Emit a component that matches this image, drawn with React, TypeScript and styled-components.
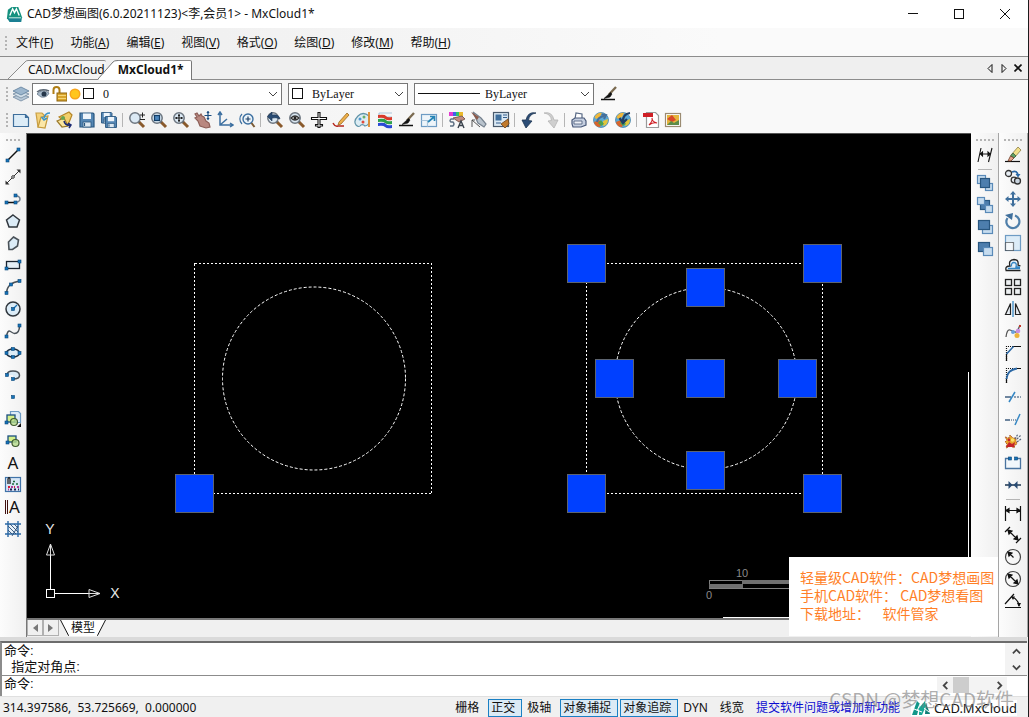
import React from "react";
import styled, { createGlobalStyle } from "styled-components";

const UI_FONT = `"Noto Sans", "Noto Sans CJK SC", sans-serif`;
const COMMAND_FONT = `"Liberation Sans", "Noto Sans CJK SC", sans-serif`;

const GlobalStyle = createGlobalStyle`
  * { box-sizing: border-box; }
  body {
    margin: 0;
    font: 12px/16px ${UI_FONT};
    color: #111;
    background: #f0f0f0;
  }
  button, input, select {
    font: inherit;
    color: inherit;
    margin: 0;
    padding: 0;
    border: 0;
    background: none;
    border-radius: 0;
  }
  svg { display: block; flex: none; }
`;

/* ---------- icons ---------- */

const Svg = ({ children, size = 18 }: { children: React.ReactNode; size?: number }) => (
  <svg width={size} height={size} viewBox="0 0 18 18" fill="none" stroke="#222" strokeWidth="1.2" aria-hidden="true">
    {children}
  </svg>
);

const Node = ({ x, y }: { x: number; y: number }) => (
  <rect x={x - 1.5} y={y - 1.5} width="3" height="3" fill="#1673b8" stroke="#0b4678" strokeWidth="0.6" />
);

const Lens = ({ children }: { children?: React.ReactNode }) => (
  <>
    <path d="M10.5 10.5L16 16" stroke="#8a5a2c" strokeWidth="3" />
    <path d="M10 10l1.5 1.5" stroke="#555" strokeWidth="2" />
    <circle cx="7" cy="7" r="5.2" fill="#dbe9f4" stroke="#6d7680" strokeWidth="1.5" />
    {children}
  </>
);

const Brush = () => (
  <>
    <path d="M16 2L9 9.5" stroke="#7a6a50" strokeWidth="2.4" />
    <path d="M10.5 7.5L4 13.5l6-1.5 2-3z" fill="#111" stroke="#111" strokeWidth="0.6" />
  </>
);

const Globe = () => (
  <>
    <circle cx="9" cy="9" r="7.5" fill="#5aa9d6" stroke="#4a87aa" strokeWidth="0.8" />
    <path d="M2.5 6Q6 1 10 2L8 6 4 8z" fill="#f0b73a" stroke="none" />
    <path d="M2 11l5-2 3 3-2 4Q3 16 2 11z" fill="#d9652b" stroke="none" />
    <path d="M11 10l5-2q0 6-5 7z" fill="#e2c53c" stroke="none" />
    <path d="M6 12l3 3 3-2-3-4z" fill="#4da04e" stroke="none" />
  </>
);

const Floppy = ({ x = 0, y = 0, s = 1 }: { x?: number; y?: number; s?: number }) => (
  <g transform={`translate(${x} ${y}) scale(${s})`}>
    <path d="M2 2h13l1 1v13H2z" fill="#5687b4" stroke="#28567f" />
    <rect x="5" y="2.5" width="8" height="5.5" fill="#eef5fb" stroke="none" />
    <rect x="5" y="11" width="8" height="5" fill="#dde8f1" stroke="#28567f" strokeWidth="0.8" />
    <path d="M6.5 12v3" stroke="#28567f" />
  </g>
);

const DARK = { fill: "#4d7ead", stroke: "#28567f" };
const LIGHT = { fill: "#c6dcef", stroke: "#5a8ab8" };

const ICONS: Record<string, React.ReactNode> = {
  bringToFront: (
    <>
      <rect x="1.5" y="1.5" width="8" height="8" {...LIGHT} />
      <rect x="9.5" y="9.5" width="7" height="7" {...LIGHT} />
      <rect x="4.5" y="4.5" width="9" height="9" {...DARK} />
    </>
  ),
  sendToBack: (
    <>
      <rect x="4.5" y="4.5" width="9" height="9" {...DARK} />
      <rect x="1.5" y="1.5" width="7" height="7" {...LIGHT} />
      <rect x="9.5" y="9.5" width="7" height="7" {...LIGHT} />
    </>
  ),
  bringAbove: (
    <>
      <rect x="6.5" y="7.5" width="10" height="8" {...LIGHT} />
      <rect x="2.5" y="2.5" width="11" height="9" {...DARK} />
    </>
  ),
  sendUnder: (
    <>
      <rect x="2.5" y="2.5" width="11" height="9" {...DARK} />
      <rect x="7.5" y="7.5" width="9" height="8" {...LIGHT} />
    </>
  ),
  layers: (
    <>
      <path d="M1 12l8-3 8 3-8 4z" fill="#b8c9d8" stroke="#71889e" strokeWidth="0.8" />
      <path d="M1 9l8-3 8 3-8 4z" fill="#d2dfe9" stroke="#71889e" strokeWidth="0.8" />
      <path d="M1 6l8-4 8 4-8 4z" fill="#9cb6cd" stroke="#5d7c99" strokeWidth="0.8" />
    </>
  ),
  newFile: <path d="M1.5 3.5h12l3 3v9h-15zM13.5 3.5v3h3" fill="#dcecf7" stroke="#3f6f9c" />,
  open: (
    <>
      <path d="M2 2h6l2 2v12H4z" fill="#f4d27b" stroke="#c99f45" />
      <path d="M7 6l7-1-3 12-7-1z" fill="#fbe7a8" stroke="#c49a3c" />
      <path d="M16 2q-5 0-6 5M7.500 6l2.500 3 3-2" stroke="#3a93c8" strokeWidth="1.6" />
    </>
  ),
  recent: (
    <>
      <path d="M3 6L13 1l3 3-4 10z" fill="#f3cf6b" stroke="#b58527" />
      <path d="M1 10l7-3 4 8-6 1z" fill="#fae59e" stroke="#9c7a2a" />
      <path d="M8 10q1 5 7 4m-3-2l3 2-2 3" stroke="#1c2a72" strokeWidth="1.5" />
      <circle cx="7" cy="7" r="2" fill="#68a552" stroke="none" />
    </>
  ),
  save: <Floppy />,
  saveAll: (
    <>
      <Floppy s={0.75} />
      <Floppy x={4} y={4} s={0.78} />
    </>
  ),
  zoomRt: (
    <>
      <Lens />
      <path d="M12 4h5M14.5 1.500v5M12 8.500h5" stroke="#222" strokeWidth="1" />
    </>
  ),
  zoomWin: (
    <Lens>
      <rect x="4.5" y="4.5" width="5" height="5" fill="#4b86bd" stroke="#123d66" />
    </Lens>
  ),
  zoomExt: (
    <Lens>
      <path d="M7 3v8M3 7h8M6 4.5h2M6 9.5h2M4.5 6v2M9.5 6v2" stroke="#222" strokeWidth="1.2" />
    </Lens>
  ),
  pan: (
    <>
      <path d="M1 3l2 3-2 1 3 3 2 5 6 2 4-1-1-4-3-2-2-4-2-1-1-2-2 2-2-3z" fill="#b98880" stroke="#8d5f58" />
      <path d="M14 1v7M10.5 4.5h7M13 2l1-1.5L15 2M13 7l1 1.5L15 7" stroke="#1a4c80" />
    </>
  ),
  ucs: <path d="M4 2v12h12M2 4l2-3 2 3M14 12l3 2-3 2M4 14l7-6" stroke="#3c6fa0" strokeWidth="1.5" />,
  zoomPlus: (
    <>
      <path d="M4 3a7 7 0 0 0 0 10" stroke="#3c6fa0" />
      <circle cx="10" cy="8" r="5" fill="#eaf3fa" stroke="#3c6fa0" strokeWidth="1.4" />
      <path d="M13.5 12l3 4" stroke="#7a5a34" strokeWidth="2" />
      <path d="M10 5.5v5M7.5 8h5" stroke="#1c3d63" />
    </>
  ),
  zoomPrev: (
    <Lens>
      <path d="M14 8Q13 3 6 4V1L1.5 5.5 6 10V7q4-1 8 1z" fill="#284b73" stroke="#1c3450" strokeWidth="0.6" />
    </Lens>
  ),
  zoomEye: (
    <Lens>
      <path d="M3 7q4-4 8 0-4 4-8 0z" fill="#fff" stroke="#333" />
      <circle cx="7" cy="7" r="1.5" fill="#222" stroke="none" />
    </Lens>
  ),
  plane: (
    <path
      d="M8 1.5h2v5h6.500v2H10v5h2.500v1.500H10v1.500H8V15H5.500v-1.500H8v-5H1.500v-2H8z"
      fill="#fff"
      stroke="#111"
      strokeWidth="1.1"
    />
  ),
  pencil: (
    <>
      <path d="M15 2l2 2-8 9-3 1 1-3z" fill="#edaf4a" stroke="#9a6a1f" strokeWidth="0.8" />
      <path d="M1 12q2 4 5 3l6 0" stroke="#b5281e" strokeWidth="1.4" />
    </>
  ),
  palette: (
    <>
      <path d="M15 5Q9 0 4 5T2 14q3 3 5 0 2-1 4 1 5-1 4-6z" fill="#dcecf3" stroke="#5f93a8" />
      <circle cx="6" cy="8" r="1.5" fill="#4d97d1" stroke="none" />
      <circle cx="10" cy="6" r="1.5" fill="#67b06a" stroke="none" />
      <circle cx="9" cy="11" r="1.5" fill="#e04a3a" stroke="none" />
      <path d="M15 1v15" stroke="#e08a2b" strokeWidth="1.8" />
    </>
  ),
  colors: (
    <>
      <path d="M3 2h13M3 2v4h13" stroke="#aac6dc" />
      <path d="M2 4q7-1 8 1t6 1v3q-5 1-7-1T2 7z" fill="#d93a2b" stroke="none" />
      <path d="M2 8q7-1 8 1t6 1v3q-5 1-7-1t-7-1z" fill="#2ea14c" stroke="none" />
      <path d="M2 12q7-1 8 1t6 1v3q-5 1-7-1t-7-1z" fill="#2a49d5" stroke="none" />
    </>
  ),
  brushLine: (
    <>
      <Brush />
      <path d="M1 14.5h14" stroke="#111" strokeWidth="1.5" />
    </>
  ),
  resize: (
    <>
      <rect x="1.5" y="3.5" width="15" height="12" fill="#eef5fa" stroke="#6e9cc4" />
      <path d="M1.5 9.5h6v6" stroke="#a9c4da" />
      <path d="M8 11l6-5M10 5.500h4.500V10" stroke="#2584b5" strokeWidth="1.700" />
    </>
  ),
  textStyle: (
    <>
      <path d="M1 1h4v4H1z" fill="#e33bd0" stroke="none" />
      <path d="M5 1h3v4H5z" fill="#3c63e8" stroke="none" />
      <path d="M8 1h3v4H8z" fill="#2ec26a" stroke="none" />
      <path d="M11 1h4v4h-4z" fill="#eab92c" stroke="none" />
      <path d="M5 7l9-2 3 3-6 3z" fill="#c08c82" stroke="#68463b" strokeWidth="0.8" />
      <path d="M6 8H3q-2 2 0 3h2q2 2 0 4H2" stroke="#5f7184" strokeWidth="1.400" />
      <path d="M10 17l3-7 3 7M11 14.500h4" stroke="#39424c" strokeWidth="1.4" />
    </>
  ),
  erasePen: (
    <>
      <path d="M3 1l8 6 5 6-2 3-6-4z" fill="#b9c3cd" stroke="#76828f" />
      <path d="M1 1l8 5-2 3z" fill="#8c5a4a" stroke="none" />
      <path d="M2 9v7M2 9l8 7M2 9h3" stroke="#444" strokeWidth="0.9" />
    </>
  ),
  sheetSet: (
    <>
      <rect x="1.5" y="1.5" width="15" height="14" fill="#dbe9f4" stroke="#4a5a6c" />
      <rect x="3.5" y="3.5" width="6" height="6" fill="#3f6f9c" stroke="none" />
      <path d="M11 4h4M11 6.5h4M4 12h5" stroke="#345f8c" />
      <path d="M16 8l-7 5 4 4 4-4z" fill="#c07a2d" stroke="#6f421a" strokeWidth="0.8" />
    </>
  ),
  undo: <path d="M16 2Q8 0 6 9L2 9l4 8 6-7-3.500-.5Q9 3 16 2z" fill="#2c4d77" stroke="#1c3450" strokeWidth="0.8" />,
  redo: <path d="M2 2Q10 0 12 9l4 0-4 8-6-7 3.500-.5Q9 3 2 2z" fill="#cfcfcf" stroke="#b2b2b2" strokeWidth="0.8" />,
  print: (
    <>
      <path d="M5 8l1-6 6 1v5" fill="#fff" stroke="#586985" />
      <path d="M2 9l3-2h9l2 3v4l-5 2H3l-1-3z" fill="#c5cfe0" stroke="#4a5a7a" />
      <path d="M4 10h8v3H4z" fill="#eef1f7" stroke="#4a5a7a" strokeWidth="0.8" />
    </>
  ),
  globeUp: (
    <>
      <Globe />
      <path d="M5 11q1-5 7-6M9.5 3.5L14 4l-2 4" stroke="#456f9b" strokeWidth="2" />
    </>
  ),
  globeDown: (
    <>
      <Globe />
      <path d="M16 2q-7 1-7 8M5.5 7l3.500 5 4-4" stroke="#1f3f65" strokeWidth="2.200" />
    </>
  ),
  pdf: (
    <>
      <path d="M4.5 1.5h9l3 3v12h-12z" fill="#fff" stroke="#9a9a9a" />
      <rect x="1" y="2" width="10" height="4" fill="#cf1f25" stroke="none" />
      <path d="M7 14q4-4 3-7 0 4 5 5-4-1-8 2z" stroke="#cf1f25" strokeWidth="1.1" />
    </>
  ),
  image: (
    <>
      <rect x="1.5" y="2.5" width="15" height="13" fill="#fff" stroke="#9b8b72" />
      <rect x="3" y="4" width="12" height="10" fill="#e5b53d" stroke="none" />
      <path d="M3 8l5-4 4 5-4 2z" fill="#d8482a" stroke="none" />
      <path d="M3 14l4-4 3 2 5-3v5z" fill="#5c8c49" stroke="none" />
    </>
  ),
  line: (
    <>
      <path d="M3.5 14.5l11-11" stroke="#111" strokeWidth="1.5" />
      <Node x={3.5} y={14.5} />
      <Node x={14.5} y={3.5} />
    </>
  ),
  xline: (
    <>
      <path d="M2 16L16 2" stroke="#333" strokeWidth="1" />
      <path d="M1.5 12.5v4h4zM12.5 1.5h4v4z" fill="#333" stroke="none" />
      <circle cx="9" cy="9" r="1.3" fill="#fff" stroke="#333" strokeWidth="1" />
    </>
  ),
  polyline: (
    <>
      <path d="M3 12.5h10" stroke="#111" strokeWidth="1.5" />
      <path d="M12 12.5q4-1 4-3.5t-4-3.5" stroke="#6d7c8c" strokeWidth="1.5" />
      <Node x={2.5} y={12.5} />
      <Node x={11.5} y={12.5} />
      <Node x={11.5} y={5.5} />
    </>
  ),
  polygon: <path d="M9 3l6.500 5-2.500 7H5L2.500 8z" fill="#dcecf7" stroke="#30373e" strokeWidth="1.5" />,
  freePoly: <path d="M9.500 3l5 3-1 6-5 3.500H5L4.500 8z" fill="#dcecf7" stroke="#4a5259" strokeWidth="1.6" />,
  rectangle: (
    <>
      <rect x="2.5" y="5.5" width="13" height="7" fill="#e3eef6" stroke="#1a2430" strokeWidth="1.3" />
      <Node x={2.5} y={12.5} />
      <Node x={15.5} y={5.5} />
    </>
  ),
  arc: (
    <>
      <path d="M2.5 15Q3 5 15.5 3" stroke="#4a5259" strokeWidth="1.5" />
      <Node x={2.5} y={15} />
      <Node x={7} y={6.5} />
      <Node x={15.5} y={3} />
    </>
  ),
  circle: (
    <>
      <circle cx="9" cy="9" r="7" fill="#dcecf7" stroke="#30373e" strokeWidth="1.5" />
      <path d="M9 9l4-4" stroke="#1673b8" strokeWidth="1.3" />
      <Node x={9} y={9} />
    </>
  ),
  spline: (
    <>
      <path d="M2.5 14.5q1-7 4-5t4 2q5 0 5-8" stroke="#4a5259" strokeWidth="1.5" />
      <Node x={2.5} y={14.5} />
      <Node x={15.5} y={3.5} />
    </>
  ),
  ellipse: (
    <>
      <ellipse cx="9" cy="9" rx="6.5" ry="4" fill="#dcecf7" stroke="#1f2f3f" strokeWidth="1.5" />
      <Node x={2.5} y={9} />
      <Node x={9} y={5} />
      <Node x={15.5} y={9} />
      <Node x={9} y={13} />
    </>
  ),
  ellipseArc: (
    <>
      <path d="M3 9q0-4 6-4t6.500 4q0 4-6.500 4V9z" fill="#dcecf7" stroke="none" />
      <path d="M3 9q0-4 6-4t6.500 4-6.500 4" stroke="#4a5259" strokeWidth="1.5" />
      <Node x={3} y={9} />
      <Node x={9} y={13} />
    </>
  ),
  point: <Node x={9} y={9} />,
  insertBlock: (
    <>
      <path d="M6.5 1.5h8l2 2v9h-10z" fill="#dcecf7" stroke="#6e9cc4" />
      <rect x="3" y="5" width="8" height="7" fill="#d5f08a" stroke="#1b4f80" strokeWidth="1.3" />
      <circle cx="10" cy="12" r="3.5" fill="#b7dc8b" fillOpacity="0.8" stroke="#3f5a2e" strokeWidth="1.2" />
      <Node x={2.5} y={12.5} />
      <path d="M17 13v4h-4z" fill="#111" stroke="none" />
    </>
  ),
  makeBlock: (
    <>
      <rect x="4" y="4" width="8" height="6" fill="#d5f08a" stroke="#1b4f80" strokeWidth="1.3" />
      <circle cx="11.5" cy="11" r="3.5" fill="#b7dc8b" fillOpacity="0.8" stroke="#3f5a2e" strokeWidth="1.2" />
      <Node x={3.5} y={10.5} />
    </>
  ),
  attribute: (
    <>
      <rect x="1.5" y="1.5" width="15" height="14" fill="#d6e6f5" stroke="#4073a8" />
      <path d="M4 8V3q1-3 2 0v5" stroke="#111" />
      <path d="M9 5.500h2M8 8h2m2 0h2" stroke="#1c6a3c" strokeWidth="1.500" />
      <path d="M4 11h2m4 0h1" stroke="#d01f3a" strokeWidth="1.800" />
      <path d="M7 11h2m4 0h2M4 13.500h1" stroke="#b03a9a" strokeWidth="1.800" />
      <path d="M6 13.500h2m2 0h2m2 0h1" stroke="#1b1c50" strokeWidth="1.800" />
    </>
  ),
  hatch: (
    <>
      <rect x="4" y="4" width="10" height="10" fill="#e7f0f8" stroke="none" />
      <path d="M4 1v16M14 1v16M1 4h16M1 14h16" stroke="#2b68a5" strokeWidth="1.4" />
      <path d="M4 10l4 4M4 6l8 8M6 4l8 8M10 4l4 4M14 6l-6 10" stroke="#2b4e75" strokeWidth="0.9" />
    </>
  ),
  dimStyle: <path d="M5 2L2 16M16 2l-3.500 14M5 8h8M4.500 8l2-2v4zM14 8l-2-2v4z" fill="#111" stroke="#111" strokeWidth="1.1" />,
  eraser: (
    <>
      <path d="M1 15.5h15" stroke="#111" strokeWidth="1.2" />
      <path d="M14 1l3 3-6 7-4-2z" fill="#f2e08a" stroke="#8b7c40" strokeWidth="0.800" />
      <path d="M9 7l3 3-2 2-3.500-2z" fill="#5fa065" stroke="#3b5c3e" strokeWidth="0.800" />
      <path d="M6.500 10l3.500 2-3 3H4z" fill="#e4a28a" stroke="#6a3a22" strokeWidth="0.800" />
    </>
  ),
  copy: (
    <>
      <circle cx="4.5" cy="5.5" r="3" fill="#e8eef4" stroke="#333" strokeWidth="1.3" />
      <circle cx="10" cy="12" r="2.8" fill="#e8eef4" stroke="#333" strokeWidth="1.3" />
      <circle cx="13.5" cy="13" r="3" fill="#c9d4df" stroke="#333" strokeWidth="1.3" />
      <path d="M8 4q5-2 6 3" stroke="#2b68a5" strokeWidth="1.8" />
      <path d="M11.5 6h5L14 9.5z" fill="#2b68a5" stroke="none" />
    </>
  ),
  move: (
    <path
      d="M9 1l3 3.500h-2V8h3.500V6L17 9l-3.500 3v-2H10v3.500h2L9 17l-3-3.500h2V10H4.500v2L1 9l3.500-3v2H8V4.500H6z"
      fill="#3f6f9c"
      stroke="none"
    />
  ),
  rotate: (
    <>
      <path d="M11 3.500A6.500 6.500 0 1 1 3.500 6" stroke="#4f7faa" strokeWidth="2.200" />
      <path d="M1 3l8-2-1 7z" fill="#3f6f9c" stroke="none" />
    </>
  ),
  scale: (
    <>
      <rect x="1.5" y="1.5" width="15" height="15" fill="#dcecf7" stroke="#6e9cc4" />
      <rect x="1.5" y="8.5" width="8" height="8" fill="#f4f8fb" stroke="#111" strokeDasharray="1 1" />
    </>
  ),
  offset: (
    <>
      <path d="M1.500 14.500h15M2 14q-1-4 4-4-2-6 4-6.500 5 0 4 5.500l2.500 1" fill="#e7f2fb" stroke="#222" strokeWidth="1.300" />
      <path d="M4 12.500h12M7.500 10.500q-.5-4 2.500-4t2 4.500h4" stroke="#3587c4" strokeWidth="1.300" />
    </>
  ),
  array: (
    <g fill="#eef1f3" stroke="#222" strokeWidth="1.3">
      <rect x="1.5" y="1.5" width="6" height="6" />
      <rect x="10.5" y="1.5" width="6" height="6" />
      <rect x="1.5" y="10.5" width="6" height="6" />
      <rect x="10.5" y="10.5" width="6" height="6" />
    </g>
  ),
  mirror: (
    <>
      <path d="M6.5 3.5v11h-5zM11.5 3.5v11h5z" fill="#e8eef4" stroke="#222" strokeWidth="1.2" />
      <path d="M9 1v16" stroke="#3587c4" strokeWidth="1.3" />
    </>
  ),
  editSpline: (
    <>
      <path d="M2 15q1-8 4-7t5 2 5-7" stroke="#555" strokeWidth="1.3" />
      <circle cx="9" cy="10" r="2" fill="#6aa0dc" stroke="none" />
      <circle cx="14" cy="9" r="2.300" fill="#c78fe0" stroke="none" />
      <circle cx="13" cy="13.5" r="2.500" fill="#eeb23a" stroke="none" />
      <path d="M15 4h2" stroke="#c4392b" strokeWidth="2" />
    </>
  ),
  chamfer: (
    <>
      <path d="M2 2.500h15M2.500 2v15" stroke="#111" strokeDasharray="1 1" />
      <path d="M9 2.500h8M2.500 10v7" stroke="#111" />
      <path d="M2.500 10L9.500 2.500" stroke="#2b68a5" strokeWidth="1.600" />
    </>
  ),
  fillet: (
    <>
      <path d="M2 2.500h15M2.500 2v15" stroke="#111" strokeDasharray="1 1" />
      <path d="M12 2.500h5M2.500 12v5" stroke="#111" />
      <path d="M2.500 13Q3 4 13 2.500" stroke="#2b68a5" strokeWidth="1.800" />
    </>
  ),
  trim: (
    <>
      <path d="M1 9h6" stroke="#24486f" strokeWidth="1.3" />
      <path d="M10 9h7" stroke="#24486f" strokeDasharray="2 1" />
      <path d="M5 14l6-10" stroke="#3587c4" strokeWidth="1.5" />
    </>
  ),
  extend: (
    <>
      <path d="M1 10h5" stroke="#24486f" strokeWidth="1.3" />
      <path d="M7 10h5" stroke="#24486f" strokeDasharray="1 1" />
      <path d="M11 15l5-11" stroke="#3587c4" strokeWidth="1.5" />
    </>
  ),
  explode: (
    <>
      <path d="M1 5l4 1 1-3 3 3 3 0 0 3 1 3-2 1-1 3-3-2-5 2 1-4-2-2 2-2z" fill="#e8a72c" stroke="#a8542b" strokeWidth="0.9" strokeDasharray="2 1" />
      <path d="M2 15l3-5 3 2 3-2-1 5z" fill="#c4242b" stroke="none" />
      <circle cx="5" cy="8" r="1.4" fill="#c4242b" stroke="none" />
      <circle cx="8.500" cy="8" r="1.800" fill="#fbe36a" stroke="none" />
      <path d="M11 7l3-5M13 7l4-4M13 10l4-3" stroke="#59677c" strokeDasharray="2 1" />
    </>
  ),
  breakLine: (
    <>
      <path d="M5 4.500H1.500v10h15v-10H13" fill="#f2f7fb" stroke="#4a74a0" strokeWidth="1.300" />
      <Node x={6} y={4.5} />
      <Node x={12} y={4.5} />
    </>
  ),
  join: (
    <>
      <path d="M1 9h16" stroke="#1b3550" strokeWidth="1.5" />
      <path d="M4.5 5l4 4-4 4zM13.5 5l-4 4 4 4z" fill="#284b73" stroke="none" />
    </>
  ),
  dimLinear: <path d="M1.500 2v15M16.500 2v15M2 6.500h14M2 6.500L5 4.500v4zM16 6.500L13 4.500v4z" fill="#111" stroke="#111" />,
  dimAligned: <path d="M1 6l5-5M12 17l5-5M4 4l10 10M4 4l4 1-3 3zM14 14l-4-1 3-3z" fill="#111" stroke="#111" />,
  dimRadius: (
    <>
      <circle cx="9" cy="9" r="7.500" stroke="#444" />
      <path d="M9.5 9.5l-5-5M4 4l4 1-3 3z" fill="#111" stroke="#111" />
    </>
  ),
  dimDiameter: (
    <>
      <circle cx="9" cy="9" r="7.500" stroke="#444" />
      <path d="M4.5 4.5l9 9M4 4l4 1-3 3zM14 14l-4-1 3-3z" fill="#111" stroke="#111" />
    </>
  ),
  dimAngular: (
    <>
      <path d="M1 15.5h16M1 12L10 2" stroke="#111" strokeWidth="1.2" />
      <path d="M8 5q6 2 7 9" stroke="#111" />
      <path d="M7 4.5h4L9 8zM13 11h4l-2 4z" fill="#111" stroke="none" />
    </>
  ),
};

const Icon = ({ name }: { name: string }) => <Svg>{ICONS[name]}</Svg>;

const AppLogo = ({ size }: { size: number }) => (
  <svg width={size} height={size} viewBox="0 0 18 18" aria-hidden="true">
    <path d="M2 4l4-3 7 0 4 11-1 5H4l-3-4z" fill="#15917f" />
    <path d="M4 10l3-7 2 4 2-4 3 7" fill="none" stroke="#fff" strokeWidth="1.5" />
    <path d="M2 13h14l0 4H4z" fill="#1b7f93" />
    <path d="M3 12.5h13" stroke="#d8f2ee" />
  </svg>
);

const CloudLogo = () => (
  <svg width="20" height="16" viewBox="0 0 20 16" aria-hidden="true">
    <path d="M1 15L6 1l3 3-3 11z" fill="#12978a" />
    <path d="M8 8l6-7 1 5-4 9H8z" fill="#1aa796" />
    <path d="M15 3l4 11h-5z" fill="#0e7f78" />
    <path d="M3 9l8 3M9 4l-3 7M13 8l5 4" stroke="#fff" />
  </svg>
);

/* ---------- frame ---------- */

const Window = styled.div`
  display: flex;
  flex-direction: column;
  min-height: 100vh;
  border-right: 1px solid #1c1c1c;
  background: #f0f0f0;
`;

const TitleBar = styled.header`
  display: flex;
  align-items: center;
  height: 28px;
  padding-left: 6px;
  background: #fff;
`;

const Title = styled.h1`
  flex: 1;
  margin: 0;
  padding-left: 4px;
  font-size: 12px;
  font-weight: 400;
`;

const CaptionButton = styled.button`
  display: flex;
  align-items: center;
  justify-content: center;
  width: 46px;
  height: 28px;
`;

const MenuBar = styled.nav`
  display: flex;
  align-items: center;
  gap: 1px;
  height: 28px;
  padding-top: 1px;
  padding-left: 5px;
  background: linear-gradient(to right, #ededed, #fafafa 70%);
`;

const MenuItem = styled.button`
  padding: 0 8px;
  height: 24px;
`;

const Grip = styled.span<{ $horizontal?: boolean; $length: number }>`
  flex: none;
  width: ${(p) => (p.$horizontal ? `${p.$length}px` : "2px")};
  height: ${(p) => (p.$horizontal ? "2px" : `${p.$length}px`)};
  background: repeating-linear-gradient(${(p) => (p.$horizontal ? "to right" : "to bottom")}, #b4b4b4 0 2px, transparent 2px 4px);
`;

const DocTabs = styled.div`
  display: flex;
  align-items: flex-end;
  height: 24px;
  padding: 0 3px 0 8px;
  border-top: 1px solid #8c8c8c;
  border-bottom: 1px solid #8c8c8c;
  background: #efefef;
`;

const DocTab = styled.button<{ $active?: boolean }>`
  display: flex;
  align-items: flex-end;
  line-height: 18px;
  white-space: nowrap;
  font-weight: ${(p) => (p.$active ? 700 : 400)};
  margin-left: ${(p) => (p.$active ? "-8px" : "0")};
  margin-bottom: ${(p) => (p.$active ? "-1px" : "0")};
  height: ${(p) => (p.$active ? "20px" : "19px")};
`;

const DocTabLabel = styled.span<{ $active?: boolean }>`
  align-self: stretch;
  padding-right: ${(p) => (p.$active ? "7px" : "1px")};
  border-top: 1px solid #8c8c8c;
  border-right: ${(p) => (p.$active ? "1px solid #777" : "0")};
  border-radius: 0 2px 0 0;
  background: ${(p) => (p.$active ? "#fff" : "#f4f4f4")};
`;

const TabTools = styled.div`
  display: flex;
  align-self: center;
  margin-left: auto;
`;

const TabTool = styled.button`
  display: flex;
  align-items: center;
  justify-content: center;
  width: 14px;
  height: 16px;
`;

const ToolRow = styled.div<{ $height: number }>`
  display: flex;
  align-items: center;
  height: ${(p) => p.$height}px;
  padding-left: 6px;
  background: linear-gradient(to right, #f1f1f1, #f9f9f9 60%);
`;

const ToolGroup = styled.div`
  display: flex;
  align-items: center;
  flex: 1;
  min-width: 0;
  padding-left: 2px;
`;

const ToolButton = styled.button`
  display: flex;
  align-items: center;
  justify-content: center;
  flex: none;
  width: 22px;
  height: 22px;
`;

const Separator = styled.span<{ $horizontal?: boolean }>`
  flex: none;
  align-self: center;
  width: ${(p) => (p.$horizontal ? "14px" : "1px")};
  height: ${(p) => (p.$horizontal ? "1px" : "14px")};
  margin: ${(p) => (p.$horizontal ? "3px 0 2px" : "0 3px 0 2px")};
  background: #b5b5b5;
`;

const Combo = styled.label<{ $width: number; $gap: number }>`
  display: flex;
  align-items: center;
  flex: 0 1 ${(p) => p.$width}px;
  gap: ${(p) => p.$gap}px;
  height: 22px;
  margin-right: 6px;
  padding: 0 3px;
  border: 1px solid #777;
  background: #fff;
`;

const ComboSelect = styled.select`
  flex: 1;
  min-width: 0;
  height: 20px;
  appearance: none;
  font-family: "Liberation Serif", serif;
`;

const ComboIcons = styled.span`
  display: flex;
  align-items: center;
  gap: 2px;
`;

/* ---------- work area ---------- */

const WorkArea = styled.main`
  position: relative;
  display: flex;
  flex: 1;
`;

const SideBar = styled.div<{ $width: number; $divided?: boolean }>`
  display: flex;
  flex-direction: column;
  align-items: center;
  flex: none;
  width: ${(p) => p.$width}px;
  padding-top: 6px;
  border-left: ${(p) => (p.$divided ? "1px solid #a5a5a5" : "0")};
  border-right: ${(p) => (p.$divided ? "1px solid #a5a5a5" : "0")};
  background: linear-gradient(to right, #fcfcfc, #f0f0f0);
`;

const SideTools = styled.div`
  display: flex;
  flex-direction: column;
  align-items: center;
  padding-top: 3px;
`;

const CanvasColumn = styled.section`
  display: flex;
  flex-direction: column;
  flex: 1;
  min-width: 0;
  border-top: 1px solid #555;
  border-left: 1px solid #777;
`;

const Drawing = styled.div`
  position: relative;
  flex: 1;
  min-height: 484px;
  overflow: hidden;
  background: #000;
  border-bottom: 2px solid #777;

  svg {
    position: absolute;
    inset: 0;
    width: 100%;
    height: 100%;
  }
  text { font-family: "Liberation Sans", sans-serif; }
`;

const ViewTabs = styled.div`
  display: flex;
  height: 17px;
  background: #f0f0f0;
`;

const ViewArrow = styled.button`
  display: flex;
  align-items: center;
  justify-content: center;
  width: 16px;
  height: 16px;
  border: 1px solid #b0b0b0;
  border-top: 0;
`;

const ViewTab = styled.button`
  display: flex;
  height: 16px;
  line-height: 15px;
  padding-left: 1px;
`;

const ViewTabLabel = styled.span`
  padding: 0 2px;
  background: #fff;
`;

const Notice = styled.aside`
  position: absolute;
  right: 30px;
  bottom: 1px;
  width: 209px;
  height: 79px;
  padding: 11px 0 0 11px;
  background: #fff;
  color: #ff7f27;
  font: 14px/18px "Noto Sans CJK SC", sans-serif;
  white-space: pre;

  p { margin: 0; }
`;

/* ---------- command line and status ---------- */

const CommandPanel = styled.section`
  margin-top: 4px;
  margin-right: 1px;
  border-top: 2px solid #6c6c6c;
  border-left: 2px solid #8c8c8c;
  background: #fff;
  font: 13px/16px ${COMMAND_FONT};
  box-shadow: 0 -4px 0 #dadada;
`;

const History = styled.div`
  display: flex;
  height: 33px;
  border-bottom: 1px solid #8c8c8c;
`;

const HistoryText = styled.pre`
  flex: 1;
  margin: 0;
  padding-left: 2px;
  font: inherit;
`;

const VScroll = styled.div`
  display: flex;
  flex-direction: column;
  align-items: center;
  width: 22px;
  background: #f3f3f3;
`;

const HScroll = styled.div`
  display: flex;
  width: 70px;
  height: 16px;
  margin: 1px 20px 0 0;
  background: #f3f3f3;
`;

const ScrollButton = styled.button`
  display: flex;
  align-items: center;
  justify-content: center;
  flex: none;
  width: 16px;
  height: 16px;
`;

const Thumb = styled.span`
  width: 16px;
  margin-right: auto;
  background: #cdcdcd;
`;

const Prompt = styled.div`
  display: flex;
  height: 20px;
  padding-left: 2px;
`;

const PromptInput = styled.input`
  flex: 1;
  min-width: 0;
  height: 16px;
  padding-left: 4px;
  outline: 0;
`;

const StatusBar = styled.footer`
  position: relative;
  display: flex;
  align-items: center;
  gap: 2px;
  height: 21px;
  padding: 2px 11px 0 3px;
  border-top: 1px solid #e0e0e0;
  background: #f0f0f0;
  white-space: nowrap;
`;

const Coordinates = styled.output`
  flex: 1;
  white-space: pre;
`;

const Toggle = styled.button<{ $on?: boolean }>`
  height: 18px;
  padding: 0 6px 0 2px;
  line-height: 16px;
  border: 1px solid ${(p) => (p.$on ? "#1a80c4" : "transparent")};
  background: ${(p) => (p.$on ? "#dbeaf5" : "transparent")};
`;

const Feedback = styled.a`
  margin: 0 9px 0 3px;
  color: #0b0bd0;
  text-decoration: none;
`;

const Brand = styled.span`
  display: flex;
  align-items: center;
  gap: 3px;
  background: #fff;
  font-size: 13px;
`;

const Watermark = styled.span`
  position: absolute;
  right: 14px;
  bottom: 5px;
  font: 19px/26px "Noto Sans CJK SC", sans-serif;
  color: rgba(120, 120, 120, 0.6);
  pointer-events: none;
`;

const LetterIcon = styled.span<{ $barred?: boolean }>`
  padding: 0 1px;
  font-size: 17px;
  line-height: 14px;
  border-left: ${(p) => (p.$barred ? "3px double #401010" : "0")};
`;

/* ---------- data ---------- */

const MENUS: [string, string][] = [
  ["文件", "F"], ["功能", "A"], ["编辑", "E"], ["视图", "V"],
  ["格式", "O"], ["绘图", "D"], ["修改", "M"], ["帮助", "H"],
];

const MAIN_TOOLS = [
  "newFile", "open", "recent", "save", "saveAll", "|",
  "zoomRt", "zoomWin", "zoomExt", "pan", "ucs", "zoomPlus", "|",
  "zoomPrev", "zoomEye", "plane", "pencil", "palette", "colors", "brushLine", "resize", "|",
  "textStyle", "erasePen", "sheetSet", "|", "undo", "redo", "|",
  "print", "globeUp", "globeDown", "|", "pdf", "image",
];

const DRAW_TOOLS = [
  "line", "xline", "polyline", "polygon", "freePoly", "rectangle", "arc", "circle", "spline",
  "ellipse", "ellipseArc", "point", "insertBlock", "makeBlock", "text", "attribute", "mtext", "hatch",
];

const ORDER_TOOLS = ["dimStyle", "|", "bringToFront", "sendToBack", "bringAbove", "sendUnder"];

const MODIFY_TOOLS = [
  "eraser", "copy", "move", "rotate", "scale", "offset", "array", "mirror", "editSpline", "chamfer",
  "fillet", "trim", "extend", "explode", "breakLine", "join", "|",
  "dimLinear", "dimAligned", "dimRadius", "dimDiameter", "dimAngular",
];

const GRIPS = [
  [167, 359], [559, 129], [795, 129], [559, 359], [795, 359],
  [678, 153], [587, 244], [678, 244], [770, 244], [678, 336],
];

const TOGGLES: [string, boolean][] = [
  ["栅格", false], ["正交", true], ["极轴", false], ["对象捕捉", true],
  ["对象追踪", true], ["DYN", false], ["线宽", false],
];

const ToolIcon = ({ name }: { name: string }) => {
  if (name === "text") return <LetterIcon>A</LetterIcon>;
  if (name === "mtext") return <LetterIcon $barred>A</LetterIcon>;
  return <Icon name={name} />;
};

const ToolList = ({ tools, horizontal }: { tools: string[]; horizontal?: boolean }) => (
  <>
    {tools.map((t, i) =>
      t === "|" ? (
        <Separator key={i} $horizontal={horizontal} />
      ) : (
        <ToolButton key={i} aria-label={t}>
          <ToolIcon name={t} />
        </ToolButton>
      )
    )}
  </>
);

const CHEVRONS = { down: "M1 3l4 4 4-4", up: "M1 7l4-4 4 4", left: "M7 1L3 5l4 4", right: "M3 1l4 4-4 4" };

const Chevron = ({ dir = "down", bold }: { dir?: keyof typeof CHEVRONS; bold?: boolean }) => (
  <svg width={bold ? 9 : 10} height={bold ? 9 : 10} viewBox="0 0 10 10" fill="none" stroke="#444" strokeWidth={bold ? 2 : 1} aria-hidden="true">
    <path d={CHEVRONS[dir]} />
  </svg>
);

const Swatch = () => (
  <svg width="11" height="11" viewBox="0 0 11 11" aria-hidden="true">
    <rect x="0.5" y="0.5" width="10" height="10" fill="#fff" stroke="#111" />
  </svg>
);

const LayerState = () => (
  <ComboIcons>
    <svg width="14" height="12" viewBox="0 0 14 12" aria-hidden="true">
      <path d="M1 6q5-6 12-1-2 5-8 4z" fill="#a9bccd" stroke="#7c8b9a" />
      <circle cx="8" cy="6" r="2.5" fill="#26374a" />
      <path d="M1 4q5-4 12-1" fill="none" stroke="#5a6673" strokeWidth="1.5" />
    </svg>
    <svg width="15" height="16" viewBox="0 0 15 16" aria-hidden="true">
      <path d="M1.5 8V4q0-3 3-3t3 3v4" fill="none" stroke="#b07f16" strokeWidth="2" />
      <rect x="5" y="7" width="10" height="8" fill="#d9a52c" stroke="#8d6410" />
      <path d="M6 9.5h8M6 12.5h8" stroke="#f6d677" />
    </svg>
    <svg width="12" height="12" viewBox="0 0 12 12" aria-hidden="true">
      <circle cx="6" cy="6" r="5.5" fill="#f8a51b" />
      <circle cx="6" cy="6" r="4" fill="#ffc61c" />
    </svg>
    <Swatch />
  </ComboIcons>
);

const DrawingView = () => (
  <Drawing>
    <svg fill="none" stroke="#fff" aria-label="图纸">
      <g strokeDasharray="2 2" shapeRendering="crispEdges">
        <rect x="167.5" y="129.5" width="237" height="230" />
        <rect x="559.5" y="129.5" width="236" height="230" />
      </g>
      <g strokeDasharray="3 2">
        <circle cx="287" cy="244.5" r="91.5" />
        <circle cx="679" cy="244.5" r="91" />
      </g>
      {GRIPS.map(([x, y], i) => (
        <rect key={i} x={x - 18.5} y={y - 18.5} width="38" height="38" fill="#0040ff" stroke="#5d6470" />
      ))}
      <rect x="19.5" y="455.5" width="8" height="8" />
      <path d="M23.5 455V421M28 459.5h35" />
      <path d="M23.5 410l4 11h-8zM23.5 410v11M73 459.5l-11-4v8zM73 459.5H62" stroke="#ddd" />
      <g fill="#e8e8e8" stroke="none" fontSize="14" textAnchor="middle">
        <text x="23" y="400">Y</text>
        <text x="88" y="464">X</text>
      </g>
      <g stroke="#808080">
        <rect x="682.5" y="446.5" width="120" height="8" />
        <path d="M682 452h34M715 448h90" stroke="#707070" strokeWidth="4" />
      </g>
      <g fill="#8a8a8a" stroke="none" fontSize="11" textAnchor="middle">
        <text x="715" y="443">10</text>
        <text x="682" y="465">0</text>
      </g>
      <path d="M941.5 238v250M696 483.5h250" />
    </svg>
  </Drawing>
);

export default function App() {
  return (
    <Window>
      <GlobalStyle />
      <TitleBar>
        <AppLogo size={17} />
        <Title>CAD梦想画图(6.0.20211123)&lt;李,会员1&gt; - MxCloud1*</Title>
        <CaptionButton aria-label="最小化">
          <svg width="10" height="10" viewBox="0 0 10 10" stroke="#111"><path d="M0 4.5h10" /></svg>
        </CaptionButton>
        <CaptionButton aria-label="最大化">
          <svg width="10" height="10" viewBox="0 0 10 10" stroke="#111" fill="none"><rect x="0.5" y="0.5" width="9" height="9" /></svg>
        </CaptionButton>
        <CaptionButton aria-label="关闭">
          <svg width="10" height="10" viewBox="0 0 10 10" stroke="#111"><path d="M0 0l10 10M10 0L0 10" /></svg>
        </CaptionButton>
      </TitleBar>

      <MenuBar>
        <Grip $length={14} />
        {MENUS.map(([name, key]) => (
          <MenuItem key={key}>
            {name}(<u>{key}</u>)
          </MenuItem>
        ))}
      </MenuBar>

      <DocTabs>
        <DocTab>
          <svg width="20" height="19" viewBox="0 0 20 19">
            <path d="M0 19L17 2Q18 .5 20 .5V19z" fill="#f4f4f4" />
            <path d="M0 19L17 2Q18 .5 20 .5" fill="none" stroke="#8c8c8c" />
          </svg>
          <DocTabLabel>CAD.MxCloud</DocTabLabel>
        </DocTab>
        <DocTab $active>
          <svg width="20" height="20" viewBox="0 0 20 20">
            <path d="M0 20L15 2Q16 .5 20 .5V20z" fill="#fff" />
            <path d="M0 19L15 2Q16 .5 20 .5" fill="none" stroke="#777" />
          </svg>
          <DocTabLabel $active>MxCloud1*</DocTabLabel>
        </DocTab>
        <TabTools>
          <TabTool aria-label="上一个">
            <svg width="6" height="9" viewBox="0 0 6 9" fill="none" stroke="#111"><path d="M5 .5v8L1 4.5z" /></svg>
          </TabTool>
          <TabTool aria-label="下一个">
            <svg width="6" height="9" viewBox="0 0 6 9" fill="none" stroke="#111"><path d="M1 .5v8l4-4z" /></svg>
          </TabTool>
          <TabTool aria-label="关闭标签">
            <svg width="8" height="8" viewBox="0 0 8 8" stroke="#111" strokeWidth="1.6"><path d="M.5 .5l7 7M7.5 .5l-7 7" /></svg>
          </TabTool>
        </TabTools>
      </DocTabs>

      <ToolRow $height={27}>
        <Grip $length={14} />
        <ToolGroup>
          <ToolButton aria-label="图层管理">
            <Icon name="layers" />
          </ToolButton>
          <Combo $width={250} $gap={9}>
            <LayerState />
            <ComboSelect aria-label="图层"><option>0</option></ComboSelect>
            <Chevron />
          </Combo>
          <Combo $width={120} $gap={9}>
            <Swatch />
            <ComboSelect aria-label="颜色"><option>ByLayer</option></ComboSelect>
            <Chevron />
          </Combo>
          <Combo $width={180} $gap={5}>
            <svg width="62" height="3" viewBox="0 0 62 3" stroke="#111"><path d="M0 1.5h62" /></svg>
            <ComboSelect aria-label="线型"><option>ByLayer</option></ComboSelect>
            <Chevron />
          </Combo>
          <Icon name="brushLine" />
        </ToolGroup>
      </ToolRow>

      <ToolRow $height={26}>
        <Grip $length={14} />
        <ToolGroup>
          <ToolList tools={MAIN_TOOLS} />
        </ToolGroup>
      </ToolRow>

      <WorkArea>
        <SideBar $width={26}>
          <Grip $horizontal $length={14} />
          <SideTools>
            <ToolList tools={DRAW_TOOLS} horizontal />
          </SideTools>
        </SideBar>

        <CanvasColumn>
          <DrawingView />
          <ViewTabs>
            <ViewArrow aria-label="向左"><svg width="6" height="8" viewBox="0 0 6 8"><path d="M6 0v8L1 4z" fill="#777" /></svg></ViewArrow>
            <ViewArrow aria-label="向右"><svg width="6" height="8" viewBox="0 0 6 8"><path d="M0 0v8l5-4z" fill="#777" /></svg></ViewArrow>
            <ViewTab>
              <svg width="9" height="16" viewBox="0 0 9 16">
                <path d="M0 0h9v16H8z" fill="#fff" />
                <path d="M.5 0l8 15.5H9" fill="none" stroke="#111" />
              </svg>
              <ViewTabLabel>模型</ViewTabLabel>
              <svg width="9" height="16" viewBox="0 0 9 16">
                <path d="M9 0H0v16h1z" fill="#fff" />
                <path d="M8.5 0l-8 15.5H0" fill="none" stroke="#111" />
              </svg>
            </ViewTab>
          </ViewTabs>
        </CanvasColumn>

        <SideBar $width={27}>
          <Grip $horizontal $length={18} />
          <SideTools>
            <ToolList tools={ORDER_TOOLS} horizontal />
          </SideTools>
        </SideBar>
        <SideBar $width={30} $divided>
          <Grip $horizontal $length={18} />
          <SideTools>
            <ToolList tools={MODIFY_TOOLS} horizontal />
          </SideTools>
        </SideBar>

        <Notice>
          <p>轻量级CAD软件：CAD梦想画图</p>
          <p>手机CAD软件： CAD梦想看图</p>
          <p>下载地址：    软件管家</p>
        </Notice>
      </WorkArea>

      <CommandPanel>
        <History>
          <HistoryText>{"命令:\n  指定对角点:"}</HistoryText>
          <VScroll>
            <ScrollButton aria-label="向上滚动"><Chevron dir="up" bold /></ScrollButton>
            <ScrollButton aria-label="向下滚动"><Chevron dir="down" bold /></ScrollButton>
          </VScroll>
        </History>
        <Prompt>
          <label htmlFor="command">命令:</label>
          <PromptInput id="command" />
          <HScroll>
            <ScrollButton aria-label="向左滚动"><Chevron dir="left" bold /></ScrollButton>
            <Thumb />
            <ScrollButton aria-label="向右滚动"><Chevron dir="right" bold /></ScrollButton>
          </HScroll>
        </Prompt>
      </CommandPanel>

      <StatusBar>
        <Coordinates>{"314.397586,  53.725669,  0.000000"}</Coordinates>
        {TOGGLES.map(([name, on]) => (
          <Toggle key={name} $on={on} aria-pressed={on}>{name}</Toggle>
        ))}
        <Feedback href="#feedback">提交软件问题或增加新功能</Feedback>
        <Brand>
          <CloudLogo />
          CAD.MxCloud
        </Brand>
        <Watermark>CSDN @梦想CAD软件</Watermark>
      </StatusBar>
    </Window>
  );
}
